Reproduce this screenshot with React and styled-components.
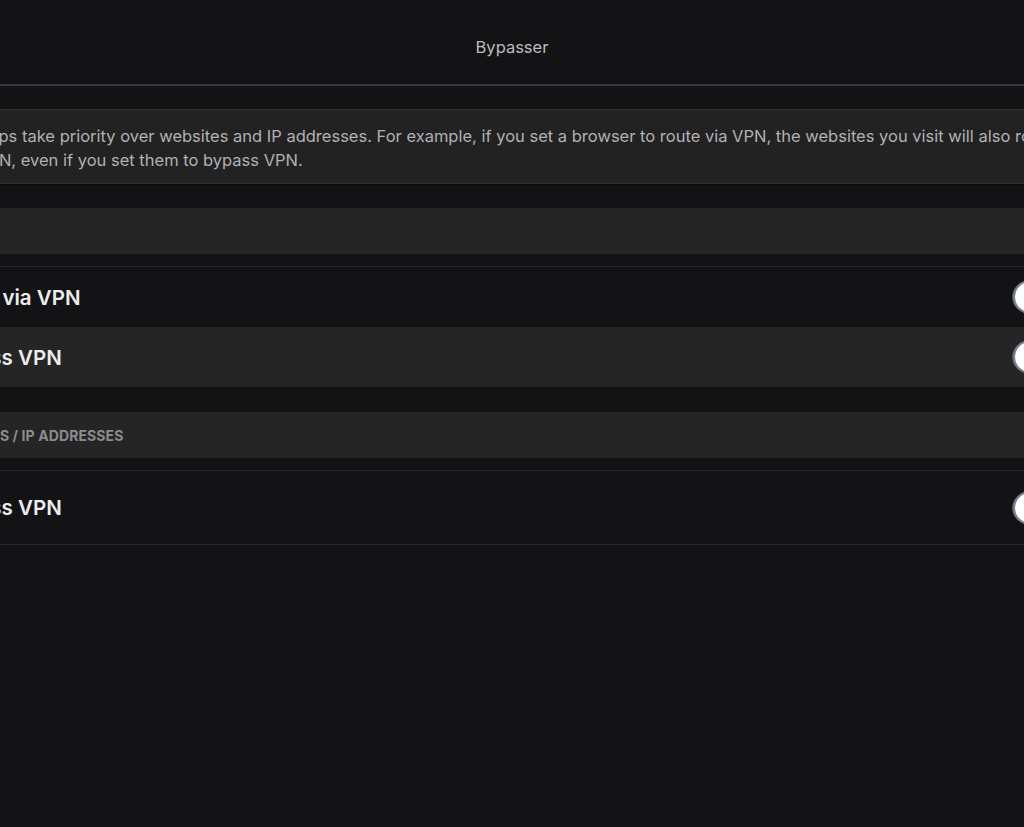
import React, { useState } from 'react';
import styled, { createGlobalStyle } from 'styled-components';

const GlobalStyle = createGlobalStyle`
  html, body {
    margin: 0;
    padding: 0;
    background: #131315;
    overflow: hidden;
  }
  body {
    font-family: Inter, "Noto Sans", "Liberation Sans", sans-serif;
    color: #e6e6e8;
  }
`;

const Page = styled.div`
  min-height: 827px;
  background: #131315;
`;

const Header = styled.header`
  height: 74px;
  padding-top: 10px;
  display: flex;
  align-items: center;
  justify-content: center;
  border-bottom: 2px solid #39393b;
`;

const Title = styled.h1`
  margin: 0;
  font-size: 16.5px;
  font-weight: 400;
  color: #bcbcbe;
`;

const Content = styled.main`
  width: 1180px;
  margin-left: -80px;
  padding-top: 23px;
  display: flex;
  flex-direction: column;
`;

const Notice = styled.div`
  background: #222223;
  border-top: 1px solid #2f2f31;
  border-bottom: 1px solid #2f2f31;
  box-shadow: 0 1px 0 #0b0b0c;
  padding: 14px 12px 11px 57px;
  font-size: 16.5px;
  line-height: 24px;
  color: #b1b1b3;
`;

const Section = styled.section`
  margin-top: ${p => p.$top}px;
  display: flex;
  flex-direction: column;
`;

const SectionHeader = styled.div`
  height: 46px;
  display: flex;
  align-items: center;
  padding-left: 16px;
  background: #252526;
  font-size: 14px;
  font-weight: 700;
  letter-spacing: 0.1px;
  text-transform: uppercase;
  color: #8c8c8e;
`;

const List = styled.div`
  margin-top: 12px;
  border-top: 1px solid #29292b;
  display: flex;
  flex-direction: column;
`;

const Row = styled.div`
  height: ${p => p.$height}px;
  display: flex;
  align-items: center;
  justify-content: space-between;
  padding: 0 32px 0 20px;
  background: ${p => (p.$shaded ? '#252526' : '#131315')};
  border-bottom: ${p => (p.$last ? '1px solid #29292b' : 'none')};
`;

const RowLabel = styled.span`
  font-size: 20.5px;
  font-weight: 600;
  color: #ececee;
`;

const Track = styled.button`
  position: relative;
  width: 56px;
  height: 32px;
  padding: 0;
  border: none;
  border-radius: 16px;
  background: ${p => (p.$on ? '#3f8cff' : '#4a4f57')};
  cursor: pointer;
`;

const Knob = styled.span`
  position: absolute;
  top: -1px;
  left: ${p => (p.$on ? '24px' : '1px')};
  width: 30px;
  height: 30px;
  border-radius: 50%;
  background: #ffffff;
  border: 2px solid #75818e;
`;

const Toggle = ({ initial = false }) => {
  const [on, setOn] = useState(initial);
  return (
    <Track $on={on} onClick={() => setOn(!on)} aria-pressed={on}>
      <Knob $on={on} />
    </Track>
  );
};

const sections = [
  {
    id: 'apps',
    title: 'Apps',
    top: 24,
    rows: [
      { id: 'apps-route', label: 'Route via VPN', height: 60 },
      { id: 'apps-bypass', label: 'Bypass VPN', height: 60, shaded: true },
    ],
  },
  {
    id: 'sites',
    title: 'Websites / IP addresses',
    top: 25,
    rows: [{ id: 'sites-bypass', label: 'Bypass VPN', height: 73, last: true }],
  },
];

const App = () => (
  <>
    <GlobalStyle />
    <Page>
      <Header>
        <Title>Bypasser</Title>
      </Header>
      <Content>
        <Notice>
          Apps take priority over websites and IP addresses. For example, if you set a browser
          to route via VPN, the websites you visit will also route via VPN, even if you set them
          to bypass VPN.
        </Notice>
        {sections.map(section => (
          <Section key={section.id} $top={section.top}>
            <SectionHeader>{section.title}</SectionHeader>
            <List>
              {section.rows.map(row => (
                <Row key={row.id} $height={row.height} $shaded={row.shaded} $last={row.last}>
                  <RowLabel>{row.label}</RowLabel>
                  <Toggle />
                </Row>
              ))}
            </List>
          </Section>
        ))}
      </Content>
    </Page>
  </>
);

export default App;
